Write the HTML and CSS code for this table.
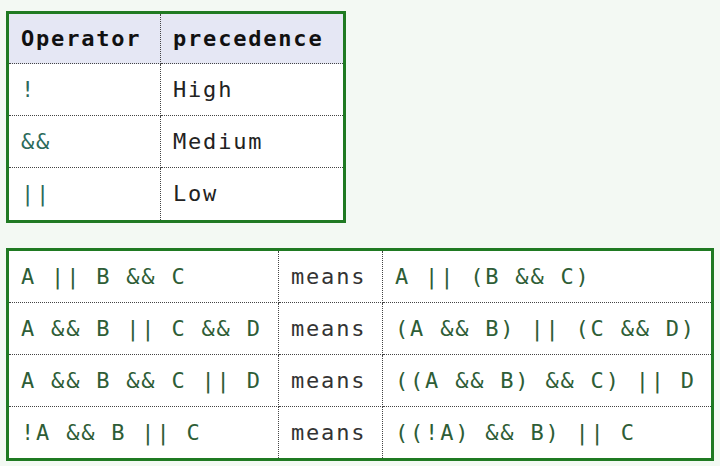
FILE: index.html
```html
<!DOCTYPE html>
<html lang="en">
<head>
  <meta charset="UTF-8">
  <title>Operator precedence</title>
  <link rel="stylesheet" href="styles.css">
</head>
<body>
  <div class="page">

    <table class="grid prec">
      <tr class="head">
        <th class="op-col">Operator</th>
        <th class="lvl-col">precedence</th>
      </tr>
      <tr>
        <td class="op-col"><code>!</code></td>
        <td class="lvl-col">High</td>
      </tr>
      <tr>
        <td class="op-col"><code>&amp;&amp;</code></td>
        <td class="lvl-col">Medium</td>
      </tr>
      <tr>
        <td class="op-col"><code>||</code></td>
        <td class="lvl-col">Low</td>
      </tr>
    </table>

    <table class="grid examples">
      <tr>
        <td class="expr-col"><code>A || B &amp;&amp; C</code></td>
        <td class="means-col">means</td>
        <td class="result-col"><code>A || (B &amp;&amp; C)</code></td>
      </tr>
      <tr>
        <td class="expr-col"><code>A &amp;&amp; B || C &amp;&amp; D</code></td>
        <td class="means-col">means</td>
        <td class="result-col"><code>(A &amp;&amp; B) || (C &amp;&amp; D)</code></td>
      </tr>
      <tr>
        <td class="expr-col"><code>A &amp;&amp; B &amp;&amp; C || D</code></td>
        <td class="means-col">means</td>
        <td class="result-col"><code>((A &amp;&amp; B) &amp;&amp; C) || D</code></td>
      </tr>
      <tr>
        <td class="expr-col"><code>!A &amp;&amp; B || C</code></td>
        <td class="means-col">means</td>
        <td class="result-col"><code>((!A) &amp;&amp; B) || C</code></td>
      </tr>
    </table>

  </div>
</body>
</html>
```

FILE: styles.css
```css
body {
  margin: 0;
  background: #f3f9f3;
  font-family: "DejaVu Sans Mono", "Liberation Mono", monospace;
  font-size: 22px;
  letter-spacing: 1.8px;
  color: #222;
}
.page {
  display: flex;
  flex-direction: column;
  align-items: flex-start;
  gap: 25px;
  padding: 11px 6px;
}
.grid {
  border: 3px solid #1f7a22;
  border-spacing: 0;
  table-layout: fixed;
  background: #fff;
}
.grid th,
.grid td {
  box-sizing: border-box;
  padding: 12px;
  line-height: 26px;
  text-align: left;
  font-weight: normal;
  white-space: pre;
  border-right: 1px dotted #444;
  border-bottom: 1px dotted #444;
}
.grid th:last-child,
.grid td:last-child {
  border-right: none;
}
.grid tr:last-child td {
  border-bottom: none;
}
code {
  font: inherit;
  letter-spacing: inherit;
}

/* operator table */
.prec {
  width: 340px;
}
.prec .head th {
  background: #e5e7f4;
  font-weight: bold;
  color: #111;
  padding-bottom: 11px;
}
.prec td {
  line-height: 27px;
}
.prec tr:last-child td {
  padding-bottom: 13px;
}
.prec .op-col {
  width: 152px;
  color: #2c6a5a;
}
.prec .head .op-col {
  color: #111;
}
.prec .lvl-col {
  width: 182px;
}

/* examples table */
.examples {
  width: 708px;
}
.examples td {
  line-height: 27px;
}
.examples .expr-col {
  width: 270px;
  color: #2e5d36;
}
.examples .means-col {
  width: 104px;
  color: #333;
}
.examples .result-col {
  width: 328px;
  color: #2e5d36;
}
```
